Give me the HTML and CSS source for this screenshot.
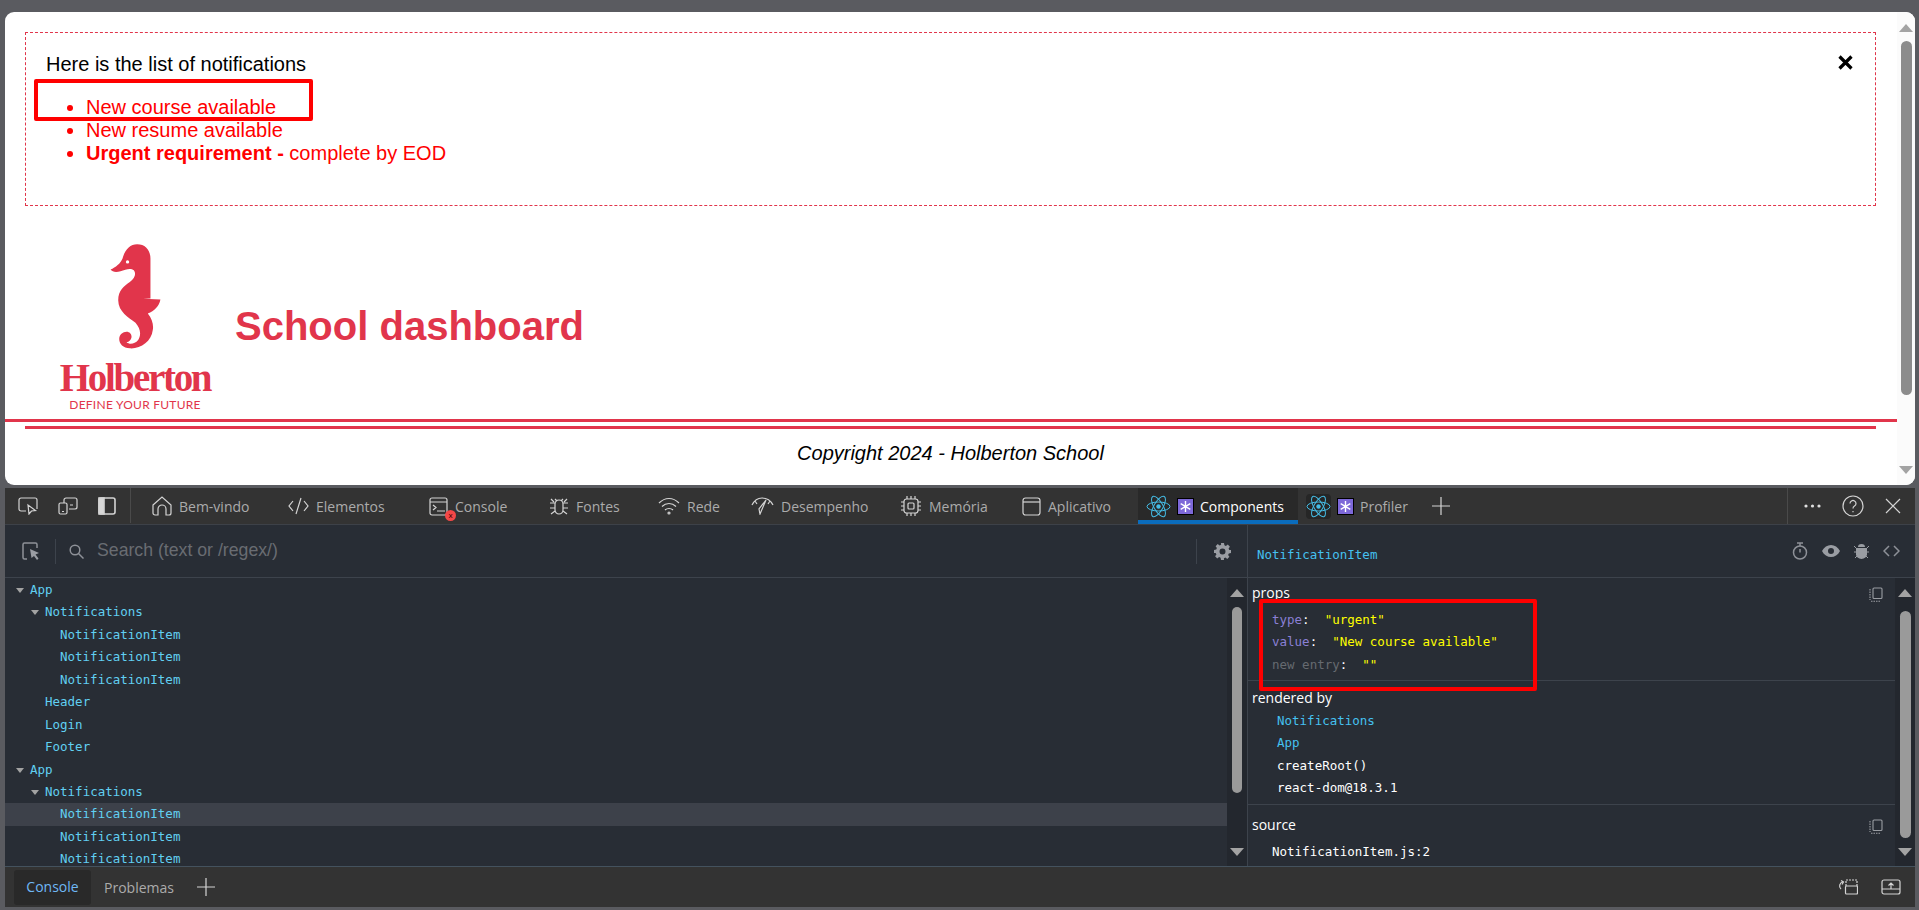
FILE: index.html
```html
<!DOCTYPE html>
<html lang="en">
  <head>
    <meta charset="UTF-8" />
    <title>School dashboard</title>
    <link rel="stylesheet" href="styles.css">
  </head>

  <body>
    <!-- Page being inspected -->
    <div class="page">
      <div class="page-content">
        <div class="notifications">
          <div class="notif-top">
            <p>Here is the list of notifications</p>
            <svg class="notif-close" width="15" height="15" viewBox="0 0 15 15"><path d="M1.5 1.5l12 12M13.5 1.5l-12 12" /></svg>
          </div>
          <ul>
            <li>New course available</li>
            <li>New resume available</li>
            <li><strong>Urgent requirement -</strong> complete by EOD</li>
          </ul>
        </div>

        <header class="app-header">
          <div class="logo">
            <svg class="seahorse" width="57" height="108" viewBox="200 35 170 325">
              <path d="M290 42C315 42 330 60 330 85L330 205L308 206L360 208C356 228 342 243 322 250C335 265 340 285 337 300C333 335 300 357 268 355C248 354 236 342 236 327C236 314 247 305 258 305C268 305 274 313 273 322C272 330 266 336 258 337C268 345 283 342 293 330C303 315 300 295 285 278C265 262 233 245 233 210C233 180 250 168 268 155C283 145 288 130 280 120C270 112 255 118 240 123C228 127 215 126 210 118C225 112 240 100 246 85C252 60 268 42 290 42Z" />
              <circle cx="261" cy="95" r="5" fill="#fff" />
            </svg>
            <span class="logo-name">Holberton</span>
            <span class="logo-tag">DEFINE YOUR FUTURE</span>
          </div>
          <h1>School dashboard</h1>
        </header>

        <footer class="app-footer">
          <p>Copyright 2024 - Holberton School</p>
        </footer>
      </div>

      <div class="scrollbar scrollbar-light">
        <span class="arrow-up"></span>
        <span class="thumb"></span>
        <span class="arrow-down"></span>
      </div>

      <div class="mark mark-page"></div>
    </div>

    <!-- Devtools -->
    <div class="devtools">
      <div class="toolbar">
        <div class="tool-icons">
          <svg class="icon" width="20" height="18" viewBox="0 0 20 18"><path d="M8 14H3a2 2 0 0 1-2-2V3a2 2 0 0 1 2-2h14a2 2 0 0 1 2 2v9" /><path d="M10 8l1 9 2.500-3 4-.5z" /></svg>
          <svg class="icon" width="20" height="18" viewBox="0 0 20 18"><path d="M6 6V3a2 2 0 0 1 2-2h9a2 2 0 0 1 2 2v7a2 2 0 0 1-2 2h-6" /><rect x="1" y="6" width="8" height="11" rx="1.500" /><path d="M12 8h3M4 14.500h2" /></svg>
          <svg class="icon icon-thick" width="18" height="18" viewBox="0 0 18 18"><rect x="1" y="1" width="16" height="16" rx="2" /><rect x="1" y="1" width="5" height="16" fill="#d8d8d8" /></svg>
        </div>

        <div class="tabs">
          <div class="tab">
            <svg class="icon" width="20" height="20" viewBox="0 0 20 20"><path d="M1 9l9-8 9 8v8a2 2 0 0 1-2 2h-3v-6a4 4 0 0 0-8 0v6H3a2 2 0 0 1-2-2z" /></svg>
            <span>Bem-vindo</span>
          </div>
          <div class="tab">
            <svg class="icon" width="21" height="18" viewBox="0 0 21 18"><path d="M5 4L1 9l4 5M16 4l4 5-4 5M13 1L8 17" /></svg>
            <span>Elementos</span>
          </div>
          <div class="tab">
            <span class="icon-wrap">
              <svg class="icon" width="19" height="19" viewBox="0 0 19 19"><rect x="1" y="1" width="17" height="17" rx="2" /><path d="M1 5h17M4 8l3 2.500L4 13M8 14h8" /></svg>
              <span class="badge">x</span>
            </span>
            <span>Console</span>
          </div>
          <div class="tab">
            <svg class="icon" width="20" height="20" viewBox="0 0 20 20"><path d="M6 8a4 4 0 0 1 8 0v6a4 4 0 0 1-8 0zM6 3l2 2M14 3l-2 2M1 7h5M19 7h-5M1 12h5M19 12h-5M2 18l4-3M18 18l-4-3M2 3l3 3M18 3l-3 3" /></svg>
            <span>Fontes</span>
          </div>
          <div class="tab">
            <svg class="icon" width="22" height="18" viewBox="0 0 22 18"><path d="M1 6c6-6 14-6 20 0M4 9.500c4-4 10-4 14 0M7 13c2-2 6-2 8 0" /><circle cx="11" cy="16" r="1" /></svg>
            <span>Rede</span>
          </div>
          <div class="tab">
            <svg class="icon" width="23" height="18" viewBox="0 0 23 18"><path d="M1 8c2-4 6-7 10-7 5 0 9 3 11 7M4 4l2 3M19 4l-2 3M15 3l-6 14-1-5z" /></svg>
            <span>Desempenho</span>
          </div>
          <div class="tab">
            <svg class="icon" width="22" height="20" viewBox="0 0 22 20"><rect x="4" y="3" width="14" height="14" rx="2.500" /><rect x="8" y="7" width="6" height="6" rx="1" /><path d="M1 6h3M1 10h3M1 14h3M18 6h3M18 10h3M18 14h3M7 0v3M11 0v3M15 0v3M7 17v3M11 17v3M15 17v3" /></svg>
            <span>Memória</span>
          </div>
          <div class="tab">
            <svg class="icon" width="19" height="19" viewBox="0 0 19 19"><rect x="1" y="1" width="17" height="17" rx="2.500" /><path d="M1 5h17" /></svg>
            <span>Aplicativo</span>
          </div>
          <div class="tab tab-active">
            <svg class="react" width="25" height="25" viewBox="0 0 25 25"><ellipse cx="12.500" cy="12.500" rx="11.500" ry="4.500" /><ellipse cx="12.500" cy="12.500" rx="11.500" ry="4.500" transform="rotate(60 12.500 12.500)" /><ellipse cx="12.500" cy="12.500" rx="11.500" ry="4.500" transform="rotate(120 12.500 12.500)" /><circle class="react-dot" cx="12.500" cy="12.500" r="2.200" /></svg>
            <span class="ext"><svg width="11" height="11" viewBox="0 0 11 11"><path d="M5.500 0v11M0.700 2.700l9.600 5.600M10.300 2.700l-9.600 5.600" /></svg></span>
            <span>Components</span>
          </div>
          <div class="tab tab-ext">
            <span class="react-wrap"><svg class="react" width="25" height="25" viewBox="0 0 25 25"><ellipse cx="12.500" cy="12.500" rx="11.500" ry="4.500" /><ellipse cx="12.500" cy="12.500" rx="11.500" ry="4.500" transform="rotate(60 12.500 12.500)" /><ellipse cx="12.500" cy="12.500" rx="11.500" ry="4.500" transform="rotate(120 12.500 12.500)" /><circle class="react-dot" cx="12.500" cy="12.500" r="2.200" /></svg></span>
            <span class="ext"><svg width="11" height="11" viewBox="0 0 11 11"><path d="M5.500 0v11M0.700 2.700l9.600 5.600M10.300 2.700l-9.600 5.600" /></svg></span>
            <span>Profiler</span>
          </div>
          <svg class="icon plus" width="18" height="18" viewBox="0 0 18 18"><path d="M9 0v18M0 9h18" /></svg>
        </div>

        <div class="tool-right">
          <svg class="dots" width="17" height="4" viewBox="0 0 17 4"><circle cx="2" cy="2" r="1.600" /><circle cx="8.500" cy="2" r="1.600" /><circle cx="15" cy="2" r="1.600" /></svg>
          <svg class="icon" width="22" height="22" viewBox="0 0 22 22"><circle cx="11" cy="11" r="10" /><path d="M8 8.500a3 3 0 1 1 4.500 2.600c-1 .6-1.500 1.200-1.500 2.400M11 16v1.200" /></svg>
          <svg class="icon" width="16" height="16" viewBox="0 0 16 16"><path d="M1 1l14 14M15 1L1 15" /></svg>
        </div>
      </div>

      <div class="panels">
        <section class="panel-left">
          <div class="search-bar">
            <svg class="icon-dim" width="18" height="18" viewBox="0 0 18 18"><path d="M7 1H2.500A1.500 1.500 0 0 0 1 2.500v13A1.500 1.500 0 0 0 2.500 17H5M1 1" fill="none" /><path d="M7 1h6.500A1.500 1.500 0 0 1 15 2.500V6" fill="none" /><path class="solid" d="M8 7l9 4-3.500 1.500 3 4-1.500 1.500-3-4L9.500 16z" /></svg>
            <span class="search-sep"></span>
            <svg class="icon-dim" width="15" height="15" viewBox="0 0 15 15"><circle cx="6" cy="6" r="4.800" fill="none" /><path d="M9.500 9.500l5 5" fill="none" /></svg>
            <span class="search-text">Search (text or /regex/)</span>
            <span class="search-sep search-sep-end"></span>
            <svg class="gear" width="17" height="17" viewBox="0 0 17 17"><path fill-rule="evenodd" d="M7 0h3l.4 2.200 1.500.7L13.800 1.600l2.100 2.100-1.300 1.900.7 1.500L17 7v3l-2.200.4-.7 1.500 1.300 1.900-2.100 2.100-1.900-1.300-1.500.7L10 17H7l-.4-2.200-1.500-.7-1.900 1.300-2.100-2.100 1.300-1.900-.7-1.500L0 10V7l2.200-.4.7-1.500-1.300-1.900 2.100-2.100 1.900 1.300 1.500-.7zM8.500 5.500a3 3 0 1 0 0 6 3 3 0 0 0 0-6z" /></svg>
          </div>

          <div class="tree-wrap">
            <div class="tree">
              <div class="row depth-0"><span class="caret"></span>App</div>
              <div class="row depth-1"><span class="caret"></span>Notifications</div>
              <div class="row depth-2">NotificationItem</div>
              <div class="row depth-2">NotificationItem</div>
              <div class="row depth-2">NotificationItem</div>
              <div class="row depth-1">Header</div>
              <div class="row depth-1">Login</div>
              <div class="row depth-1">Footer</div>
              <div class="row depth-0"><span class="caret"></span>App</div>
              <div class="row depth-1"><span class="caret"></span>Notifications</div>
              <div class="row depth-2 row-selected">NotificationItem</div>
              <div class="row depth-2">NotificationItem</div>
              <div class="row depth-2">NotificationItem</div>
            </div>
            <div class="scrollbar scrollbar-left">
              <span class="arrow-up"></span>
              <span class="thumb"></span>
              <span class="arrow-down"></span>
            </div>
          </div>
        </section>

        <section class="panel-right">
          <div class="detail-head">
            <span class="detail-name">NotificationItem</span>
            <div class="detail-icons">
              <svg class="icon-dim" width="16" height="18" viewBox="0 0 16 18"><circle cx="8" cy="10.500" r="6.500" fill="none" /><path d="M5 1h6M8 1v3M8 10.500V7" fill="none" /></svg>
              <svg width="18" height="12" viewBox="0 0 18 12"><path class="solid" fill-rule="evenodd" d="M0 6c2-4 5.500-6 9-6s7 2 9 6c-2 4-5.500 6-9 6S2 10 0 6zm9-3a3 3 0 1 0 0 6 3 3 0 0 0 0-6z" /></svg>
              <svg width="15" height="16" viewBox="0 0 15 16"><path class="solid" d="M4 4a3.500 3 0 0 1 7 0zM3 5h9a1 1 0 0 1 1 1v5a5.500 5 0 0 1-11 0V6a1 1 0 0 1 1-1z" /><path class="bug-legs" d="M0 3l3 3M15 3l-3 3M0 9h3M15 9h-3M1 15l2-2M14 15l-2-2M2 8.500h11M2 11.500h11" /></svg>
              <svg class="icon-dim" width="17" height="12" viewBox="0 0 17 12"><path d="M6 1L1 6l5 5M11 1l5 5-5 5" fill="none" /></svg>
            </div>
          </div>

          <div class="detail-wrap">
            <div class="detail-body">
              <div class="section section-props">
                <div class="label-row">
                  <span>props</span>
                  <svg class="copy" width="14" height="15" viewBox="0 0 14 15"><rect x="4" y="1" width="9" height="10.500" rx="1" /><path d="M1 2v11M2 14.200h9" stroke-dasharray="1.500 1" /></svg>
                </div>
                <div class="code"><span class="key">type</span>:  <span class="val">"urgent"</span></div>
                <div class="code"><span class="key">value</span>:  <span class="val">"New course available"</span></div>
                <div class="code"><span class="key key-new">new entry</span>:  <span class="val">""</span></div>
              </div>

              <div class="section section-rendered">
                <div class="label-row"><span>rendered by</span></div>
                <div class="code code-deep link">Notifications</div>
                <div class="code code-deep link">App</div>
                <div class="code code-deep">createRoot()</div>
                <div class="code code-deep">react-dom@18.3.1</div>
              </div>

              <div class="section section-source">
                <div class="label-row">
                  <span>source</span>
                  <svg class="copy" width="14" height="15" viewBox="0 0 14 15"><rect x="4" y="1" width="9" height="10.500" rx="1" /><path d="M1 2v11M2 14.200h9" stroke-dasharray="1.500 1" /></svg>
                </div>
                <div class="code">NotificationItem.js:2</div>
              </div>
            </div>
            <div class="scrollbar scrollbar-right">
              <span class="arrow-up"></span>
              <span class="thumb"></span>
              <span class="arrow-down"></span>
            </div>
          </div>

          <div class="mark mark-props"></div>
        </section>
      </div>

      <div class="drawer">
        <div class="drawer-tab">Console</div>
        <div class="drawer-link">Problemas</div>
        <svg class="icon drawer-plus" width="18" height="18" viewBox="0 0 18 18"><path d="M9 0v18M0 9h18" /></svg>
        <div class="drawer-icons">
          <svg class="icon" width="20" height="16" viewBox="0 0 20 16"><path d="M5 3A4 4 0 0 0 3 10" /><path d="M3 1.500L5.500 3 4 5.500" /><path d="M8 7V1h11v6" stroke-dasharray="2 1" /><rect x="7.500" y="7" width="12" height="8" rx="1" /></svg>
          <svg class="icon" width="20" height="16" viewBox="0 0 20 16"><rect x="1" y="1" width="18" height="14" rx="2" /><path d="M1 10h18M10 10V4M7.500 6.500L10 4l2.500 2.500" /></svg>
        </div>
      </div>
    </div>
  </body>
</html>
```

FILE: styles.css
```css
* {
  box-sizing: border-box;
  margin: 0;
  padding: 0;
}

html,
body {
  height: 100%;
  overflow: hidden;
}

body {
  display: flex;
  flex-direction: column;
  gap: 3px;
  padding: 12px 4px 3px 5px;
  background-color: #5a5b60;
  font-family: "Liberation Sans", Arial, sans-serif;
}

/* inspected page */
.page {
  position: relative;
  display: flex;
  height: 473px;
  background-color: #ffffff;
  border-radius: 9px;
  overflow: hidden;
}

.page-content {
  flex: 1;
  min-width: 0;
}

.notifications {
  margin: 20px 21px 0 20px;
  padding: 20px;
  border: 1px dashed #e1354b;
  font-size: 20px;
  line-height: 23px;
}

.notif-top {
  display: flex;
  justify-content: space-between;
  color: #000000;
}

.notif-close {
  margin: 2px 2px 0 0;
  fill: none;
  stroke: #000000;
  stroke-width: 3.2;
}

.notifications ul {
  margin: 20px 0;
  padding-left: 40px;
  color: #ff0000;
}

.app-header {
  display: flex;
  align-items: flex-end;
  height: 216px;
  padding: 36px 0 0 55px;
  border-bottom: 3px solid #e1354b;
}

.logo {
  display: flex;
  flex-direction: column;
  align-items: center;
  width: 150px;
  height: 177px;
  color: #e1354b;
}

.seahorse {
  flex: none;
  fill: #e1354b;
}

.logo-name {
  margin-top: 10px;
  font-family: "Liberation Serif", serif;
  font-size: 39px;
  line-height: 36px;
  font-weight: 700;
  letter-spacing: -2.3px;
}

.logo-tag {
  margin-top: 3px;
  font-family: "Lato", sans-serif;
  font-size: 12px;
  line-height: 12px;
  letter-spacing: 0.25px;
  white-space: nowrap;
}

.app-header h1 {
  margin: 0 0 70px 25px;
  color: #e1354b;
  font-size: 40px;
  line-height: 46px;
}

.app-footer {
  margin: 4px 21px 0 20px;
  padding-top: 13px;
  border-top: 3px solid #e1354b;
  text-align: center;
  font-size: 20px;
  font-style: italic;
  line-height: 23px;
}

.mark {
  position: absolute;
  border: 4px solid #ff0000;
  border-radius: 2px;
}

.mark-page {
  left: 29px;
  top: 67px;
  width: 279px;
  height: 42px;
}

.mark-props {
  left: 11px;
  top: 74px;
  width: 278px;
  height: 92px;
}

/* scrollbars */
.scrollbar {
  display: flex;
  flex: none;
  flex-direction: column;
  align-items: center;
  width: 20px;
}

.arrow-up,
.arrow-down {
  flex: none;
  width: 0;
  height: 0;
  border-left: 7px solid transparent;
  border-right: 7px solid transparent;
}

.arrow-up {
  border-bottom: 8px solid #a3a3a3;
}

.arrow-down {
  margin-top: auto;
  border-top: 8px solid #a3a3a3;
}

.thumb {
  flex: none;
  border-radius: 6px;
  background-color: #909090;
}

.scrollbar-light {
  width: 18px;
  padding: 12px 0 11px;
  background-color: #fbfbfb;
}

.scrollbar-light .thumb {
  width: 11px;
  height: 354px;
  margin-top: 9px;
  background-color: #8c8c8c;
}

.scrollbar-left {
  padding: 11px 0 10px;
  background-color: #23272e;
}

.scrollbar-left .thumb {
  width: 10px;
  height: 186px;
  margin-top: 10px;
  background-color: #9a9a9a;
}

.scrollbar-right {
  padding: 11px 0 10px;
  background-color: #23272e;
}

.scrollbar-right .thumb {
  width: 11px;
  height: 227px;
  margin-top: 14px;
  background-color: #9a9a9a;
}

/* devtools */
.devtools {
  display: flex;
  flex-direction: column;
  height: 419px;
  background-color: #282d35;
  color: #ffffff;
  font-family: "Open Sans", sans-serif;
  font-size: 14px;
}

.toolbar {
  display: flex;
  flex: none;
  height: 37px;
  background-color: #333333;
  border-bottom: 1px solid #3d4148;
}

.icon {
  flex: none;
  fill: none;
  stroke: #d4d4d4;
  stroke-width: 1.2;
}

.icon-thick {
  stroke-width: 1.6;
}

.tool-icons {
  display: flex;
  flex: none;
  align-items: center;
  gap: 20px;
  width: 126px;
  padding-left: 13px;
  border-right: 1px solid #4a4a4a;
  margin-bottom: 1px;
}

.tabs {
  display: grid;
  grid-template-columns: 136px 141px 120px 109px 93px 149px 122px 124px 160px 126px 30px;
  margin-left: 13px;
}

.tab {
  position: relative;
  display: flex;
  align-items: center;
  gap: 7px;
  padding-left: 8px;
  color: #ababab;
  white-space: nowrap;
}

.tab-active {
  color: #ffffff;
  background-color: #292929;
  border-bottom: 4px solid #0a6cbd;
  gap: 6px;
  margin-right: 0;
  padding-top: 4px;
}

.tab-ext {
  gap: 6px;
}

.icon-wrap {
  position: relative;
  display: flex;
}

.badge {
  position: absolute;
  right: -8px;
  bottom: -5px;
  width: 11px;
  height: 11px;
  border-radius: 50%;
  background-color: #f44747;
  color: #3a0000;
  font-size: 8px;
  line-height: 10px;
  text-align: center;
}

.react {
  flex: none;
  fill: none;
  stroke: #45bde6;
  stroke-width: 1;
}

.react-dot {
  fill: #45bde6;
  stroke: none;
}

.react-wrap {
  display: flex;
  border-radius: 4px;
  background-color: #262626;
}

.ext {
  display: flex;
  flex: none;
  align-items: center;
  justify-content: center;
  width: 17px;
  height: 17px;
  border: 1px solid #000000;
  background-color: #7d68d8;
}

.ext svg {
  fill: none;
  stroke: #ffffff;
  stroke-width: 1.4;
}

.plus {
  align-self: center;
  margin-left: 8px;
}

.tool-right {
  display: flex;
  flex: none;
  align-items: center;
  gap: 21px;
  margin-left: auto;
  padding: 0 14px 0 16px;
  border-left: 1px solid #4a4a4a;
}

.dots {
  fill: #e0e0e0;
}

.panels {
  display: flex;
  flex: 1;
  min-height: 0;
}

.panel-left {
  display: flex;
  flex: none;
  flex-direction: column;
  width: 1243px;
  border-right: 1px solid #3d434c;
}

.search-bar {
  display: flex;
  flex: none;
  align-items: center;
  height: 53px;
  padding: 0 16px 0 17px;
  border-bottom: 1px solid #3d434c;
}

.search-sep {
  width: 1px;
  height: 25px;
  margin: 0 13px 0 15px;
  background-color: #3d434c;
}

.search-sep-end {
  margin: 0 17px 0 auto;
}

.icon-dim {
  flex: none;
  stroke: #8e9198;
  stroke-width: 1.5;
}

.solid {
  fill: #9a9da3;
  stroke: none;
}

.bug-legs {
  fill: none;
  stroke: #9a9da3;
  stroke-width: 1;
}

.search-text {
  margin: -2px 0 0 13px;
  color: #696c72;
  font-family: "Liberation Sans", sans-serif;
  font-size: 17.7px;
}

.gear {
  flex: none;
  fill: #9a9da3;
}

.tree-wrap {
  display: flex;
  flex: 1;
  min-height: 0;
}

.tree {
  flex: 1;
  padding-top: 1px;
  overflow: hidden;
}

.row {
  position: relative;
  height: 22.45px;
  color: #61d0f2;
  font-family: "DejaVu Sans Mono", monospace;
  font-size: 12.5px;
  line-height: 22.45px;
  white-space: nowrap;
}

.depth-0 {
  padding-left: 25px;
}

.depth-1 {
  padding-left: 40px;
}

.depth-2 {
  padding-left: 55px;
}

.row-selected {
  background-color: #3d414a;
}

.caret {
  position: absolute;
  top: 9px;
  width: 0;
  height: 0;
  margin-left: -14px;
  border-left: 4px solid transparent;
  border-right: 4px solid transparent;
  border-top: 5px solid #a3a3a3;
}

.panel-right {
  position: relative;
  display: flex;
  flex: 1;
  flex-direction: column;
  min-width: 0;
}

.detail-head {
  display: flex;
  flex: none;
  align-items: center;
  justify-content: space-between;
  height: 53px;
  padding: 6px 15px 0 9px;
  border-bottom: 1px solid #3d434c;
}

.detail-name {
  color: #45c1f0;
  font-family: "DejaVu Sans Mono", monospace;
  font-size: 12.5px;
}

.detail-icons {
  display: flex;
  align-items: center;
  gap: 14px;
  margin-top: -6px;
}

.detail-wrap {
  display: flex;
  flex: 1;
  min-height: 0;
}

.detail-body {
  flex: 1;
  min-width: 0;
  padding-left: 4px;
  overflow: hidden;
}

.section {
  margin-left: -4px;
  padding-left: 4px;
  border-bottom: 1px solid #3d434c;
}

.section-props {
  height: 103px;
  padding-top: 5px;
}

.section-rendered {
  height: 124px;
  padding-top: 7px;
}

.section-source {
  padding-top: 10px;
  border-bottom: none;
}

.label-row {
  display: flex;
  align-items: center;
  justify-content: space-between;
  height: 22px;
  padding-right: 12px;
}

.label-row span {
  margin-top: -3px;
}

.section-props .label-row,
.section-source .label-row {
  margin-bottom: 4px;
}

.copy {
  fill: none;
  stroke: #9a9da3;
  stroke-width: 1.1;
}

.code {
  height: 22.3px;
  padding-left: 20px;
  font-family: "DejaVu Sans Mono", monospace;
  font-size: 12.5px;
  line-height: 22.3px;
  white-space: pre;
}

.code-deep {
  padding-left: 25px;
}

.link {
  color: #45c1f0;
}

.key {
  color: #8b80d6;
}

.key-new {
  color: #666a70;
}

.val {
  color: #ffff00;
}

.drawer {
  display: flex;
  flex: none;
  align-items: center;
  height: 41px;
  padding: 0 14px 0 9px;
  background-color: #333333;
  border-top: 1px solid #44525e;
}

.drawer-tab {
  width: 77px;
  height: 35px;
  border-radius: 3px;
  background-color: #292929;
  color: #6fb8f5;
  line-height: 34px;
  text-align: center;
}

.drawer-link {
  margin-left: 13px;
  color: #ababab;
}

.drawer-plus {
  margin-left: 23px;
}

.drawer-icons {
  display: flex;
  gap: 23px;
  margin-left: auto;
}
```
